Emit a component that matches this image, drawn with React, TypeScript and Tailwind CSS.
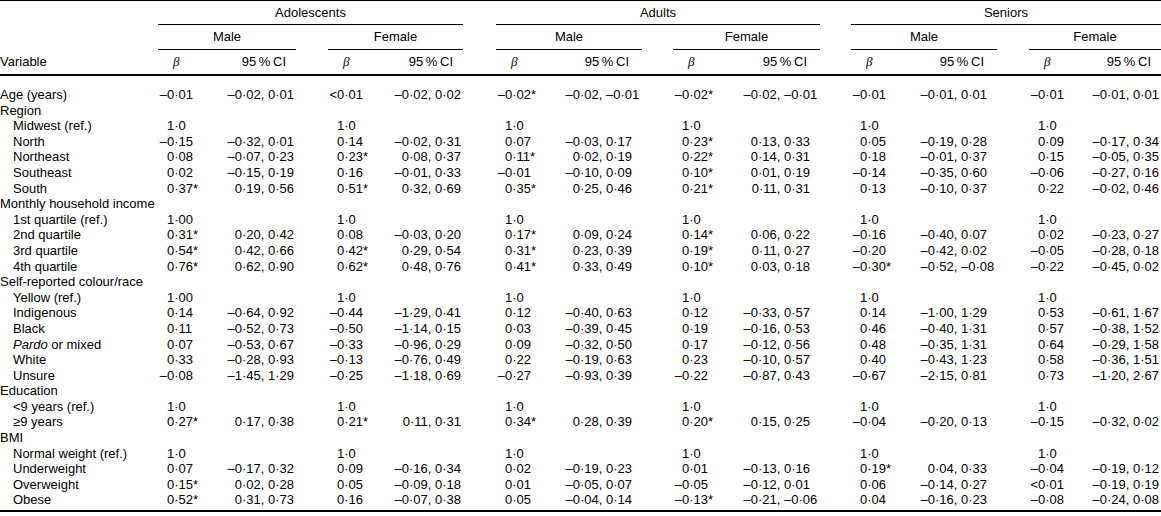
const GRID =
  "grid grid-cols-[158px_40px_98px_32px_40px_95px_33px_40px_106px_31px_40px_107px_31px_40px_106px_32px_40px_92px]";

// per sub-group: width of the slot after the comma, and header padding
const SECOND_W = ["w-[26px]", "w-[26px]", "w-[34px]", "w-[34px]", "w-[34px]", "w-[26px]"];
const CI_HEAD_PR = ["pr-[10px]", "pr-[10px]", "pr-[13px]", "pr-[13px]", "pr-[13px]", "pr-[10px]"];

type Row = { label: string; indent?: boolean; italic?: string; cells?: string };

const REF = "1.0;1.0;1.0;1.0;1.0;1.0";

const rows: Row[] = [
  { label: "Age (years)", cells: "-0.01|-0.02, 0.01;<0.01|-0.02, 0.02;-0.02*|-0.02, -0.01;-0.02*|-0.02, -0.01;-0.01|-0.01, 0.01;-0.01|-0.01, 0.01" },
  { label: "Region" },
  { label: "Midwest (ref.)", indent: true, cells: REF },
  { label: "North", indent: true, cells: "-0.15|-0.32, 0.01;0.14|-0.02, 0.31;0.07|-0.03, 0.17;0.23*|0.13, 0.33;0.05|-0.19, 0.28;0.09|-0.17, 0.34" },
  { label: "Northeast", indent: true, cells: "0.08|-0.07, 0.23;0.23*|0.08, 0.37;0.11*|0.02, 0.19;0.22*|0.14, 0.31;0.18|-0.01, 0.37;0.15|-0.05, 0.35" },
  { label: "Southeast", indent: true, cells: "0.02|-0.15, 0.19;0.16|-0.01, 0.33;-0.01|-0.10, 0.09;0.10*|0.01, 0.19;-0.14|-0.35, 0.60;-0.06|-0.27, 0.16" },
  { label: "South", indent: true, cells: "0.37*|0.19, 0.56;0.51*|0.32, 0.69;0.35*|0.25, 0.46;0.21*|0.11, 0.31;0.13|-0.10, 0.37;0.22|-0.02, 0.46" },
  { label: "Monthly household income" },
  { label: "1st quartile (ref.)", indent: true, cells: "1.00;1.0;1.0;1.0;1.0;1.0" },
  { label: "2nd quartile", indent: true, cells: "0.31*|0.20, 0.42;0.08|-0.03, 0.20;0.17*|0.09, 0.24;0.14*|0.06, 0.22;-0.16|-0.40, 0.07;0.02|-0.23, 0.27" },
  { label: "3rd quartile", indent: true, cells: "0.54*|0.42, 0.66;0.42*|0.29, 0.54;0.31*|0.23, 0.39;0.19*|0.11, 0.27;-0.20|-0.42, 0.02;-0.05|-0.28, 0.18" },
  { label: "4th quartile", indent: true, cells: "0.76*|0.62, 0.90;0.62*|0.48, 0.76;0.41*|0.33, 0.49;0.10*|0.03, 0.18;-0.30*|-0.52, -0.08;-0.22|-0.45, 0.02" },
  { label: "Self-reported colour/race" },
  { label: "Yellow (ref.)", indent: true, cells: "1.00;1.0;1.0;1.0;1.0;1.0" },
  { label: "Indigenous", indent: true, cells: "0.14|-0.64, 0.92;-0.44|-1.29, 0.41;0.12|-0.40, 0.63;0.12|-0.33, 0.57;0.14|-1.00, 1.29;0.53|-0.61, 1.67" },
  { label: "Black", indent: true, cells: "0.11|-0.52, 0.73;-0.50|-1.14, 0.15;0.03|-0.39, 0.45;0.19|-0.16, 0.53;0.46|-0.40, 1.31;0.57|-0.38, 1.52" },
  { label: " or mixed", italic: "Pardo", indent: true, cells: "0.07|-0.53, 0.67;-0.33|-0.96, 0.29;0.09|-0.32, 0.50;0.17|-0.12, 0.56;0.48|-0.35, 1.31;0.64|-0.29, 1.58" },
  { label: "White", indent: true, cells: "0.33|-0.28, 0.93;-0.13|-0.76, 0.49;0.22|-0.19, 0.63;0.23|-0.10, 0.57;0.40|-0.43, 1.23;0.58|-0.36, 1.51" },
  { label: "Unsure", indent: true, cells: "-0.08|-1.45, 1.29;-0.25|-1.18, 0.69;-0.27|-0.93, 0.39;-0.22|-0.87, 0.43;-0.67|-2.15, 0.81;0.73|-1.20, 2.67" },
  { label: "Education" },
  { label: "<9 years (ref.)", indent: true, cells: REF },
  { label: "≥9 years", indent: true, cells: "0.27*|0.17, 0.38;0.21*|0.11, 0.31;0.34*|0.28, 0.39;0.20*|0.15, 0.25;-0.04|-0.20, 0.13;-0.15|-0.32, 0.02" },
  { label: "BMI" },
  { label: "Normal weight (ref.)", indent: true, cells: REF },
  { label: "Underweight", indent: true, cells: "0.07|-0.17, 0.32;0.09|-0.16, 0.34;0.02|-0.19, 0.23;0.01|-0.13, 0.16;0.19*|0.04, 0.33;-0.04|-0.19, 0.12" },
  { label: "Overweight", indent: true, cells: "0.15*|0.02, 0.28;0.05|-0.09, 0.18;0.01|-0.05, 0.07;-0.05|-0.12, 0.01;0.06|-0.14, 0.27;<0.01|-0.19, 0.19" },
  { label: "Obese", indent: true, cells: "0.52*|0.31, 0.73;0.16|-0.07, 0.38;0.05|-0.04, 0.14;-0.13*|-0.21, -0.06;0.04|-0.16, 0.23;-0.08|-0.24, 0.08" },
];

// typeset: en dash for minus, raised dot for decimal point
const fmt = (s: string) => s.replace(/-/g, "–").replace(/\./g, "·");

const Beta = ({ v }: { v: string }) => {
  const sign = v[0] === "-" || v[0] === "<" ? v[0] : "";
  const rest = sign ? v.slice(1) : v;
  return (
    <div className="flex pl-[1px] whitespace-nowrap">
      <span className="w-[8px] shrink-0 text-right">{fmt(sign)}</span>
      <span>{fmt(rest)}</span>
    </div>
  );
};

const CI = ({ v, i }: { v: string; i: number }) => {
  const [a, b] = v.split(", ");
  return (
    <div className="flex justify-end whitespace-nowrap pr-[2px]">
      <span>{fmt(a)},&nbsp;</span>
      <span className={SECOND_W[i]}>{fmt(b)}</span>
    </div>
  );
};

const Gap = () => <div />;

export default function App() {
  const subs = ["Male", "Female", "Male", "Female", "Male", "Female"];
  return (
    <div className="w-[1161px] bg-white text-black font-['Liberation_Sans',Arial,sans-serif] text-[13px] leading-[15.6px]">
      <div className="border-t border-black">
        {/* age groups */}
        <div className={`${GRID} h-[24px]`}>
          <div />
          <div className="col-span-5 flex items-center justify-center border-b border-black">Adolescents</div>
          <Gap />
          <div className="col-span-5 flex items-center justify-center border-b border-black">Adults</div>
          <Gap />
          <div className="col-span-5 flex items-center justify-center border-b border-black">Seniors</div>
        </div>
        {/* sex */}
        <div className={`${GRID} h-[25px]`}>
          <div />
          {subs.map((s, i) => (
            <>
              {i > 0 && <Gap key={`g${i}`} />}
              <div key={`s${i}`} className="col-span-2 flex items-center justify-center border-b border-black">
                {s}
              </div>
            </>
          ))}
        </div>
        {/* column names */}
        <div className={`${GRID} h-[26px] border-b-2 border-black`}>
          <div className="flex items-center">Variable</div>
          {subs.map((_, i) => (
            <>
              {i > 0 && <Gap key={`g${i}`} />}
              <div key={`b${i}`} className="flex items-center pl-[15px] font-['Liberation_Serif',serif] italic">
                β
              </div>
              <div key={`c${i}`} className={`flex items-center justify-end ${CI_HEAD_PR[i]}`}>
                95&#8201;%&#8201;CI
              </div>
            </>
          ))}
        </div>
      </div>

      <div className="pt-[11px] pb-[2px] border-b-2 border-black">
        {rows.map((r) => {
          const cells = r.cells ? r.cells.split(";") : [];
          return (
            <div key={r.label + (r.italic ?? "")} className={`${GRID} h-[15.6px]`}>
              <div className={`whitespace-nowrap ${r.indent ? "pl-[13px]" : ""}`}>
                {r.italic && <i>{r.italic}</i>}
                {r.label}
              </div>
              {r.cells &&
                cells.map((c, i) => {
                  const [b, ci] = c.split("|");
                  return (
                    <>
                      {i > 0 && <Gap key={`g${i}`} />}
                      <Beta key={`b${i}`} v={b} />
                      {ci ? <CI key={`c${i}`} v={ci} i={i} /> : <div key={`c${i}`} />}
                    </>
                  );
                })}
            </div>
          );
        })}
      </div>
    </div>
  );
}
